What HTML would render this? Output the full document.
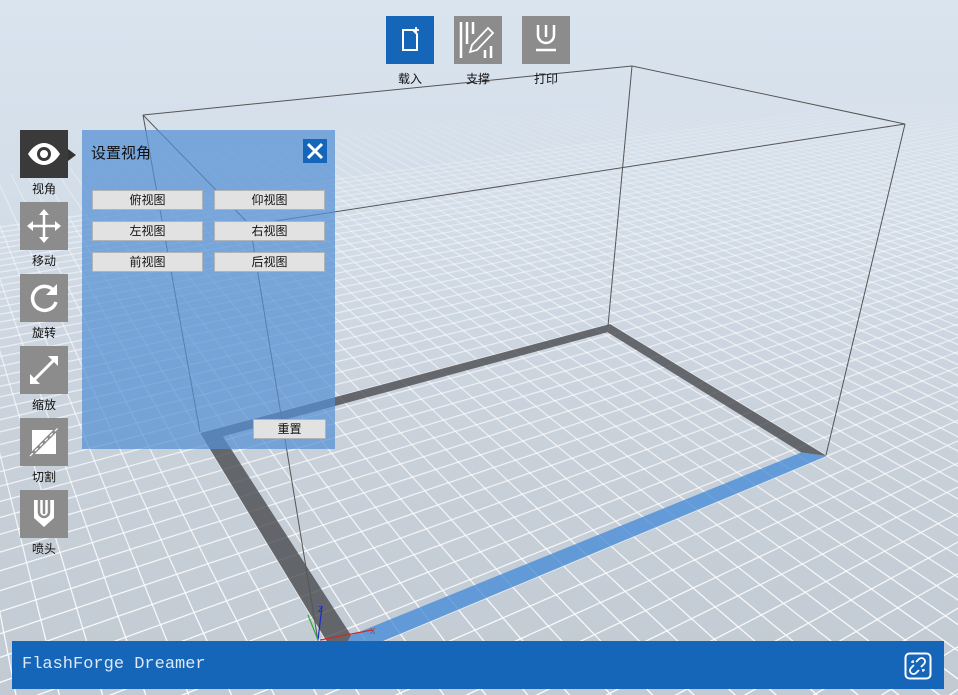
<!DOCTYPE html>
<html><head><meta charset="utf-8"><style>
*{margin:0;padding:0;box-sizing:border-box}
html{width:958px;height:695px;overflow:hidden}
body{width:958px;height:695px;overflow:hidden;position:relative;font-family:"Liberation Sans","Noto Sans CJK SC",sans-serif;background:linear-gradient(#dae4ef 0%,#d3dde8 30%,#c7cfd8 70%,#c2cad3 100%)}
svg#scene{position:absolute;left:0;top:0;overflow:hidden}
.tb{position:absolute;width:48px;height:48px;background:#8c8c8c}
.lbl{position:absolute;width:60px;text-align:center;font-size:12px;color:#111}
.panel{position:absolute;left:82px;top:130px;width:253px;height:319px;background:rgba(84,144,212,0.72)}
.btn{position:absolute;width:111px;height:20px;background:#e2e2e2;border:1px solid #b0b4b8;font-size:12px;text-align:center;line-height:18px;color:#111}
</style></head><body>
<svg id="scene" width="958" height="695">
<defs><linearGradient id="gl" gradientUnits="userSpaceOnUse" x1="0" y1="90" x2="0" y2="695"><stop offset="0" stop-color="#fff" stop-opacity="0"/><stop offset="0.25" stop-color="#fff" stop-opacity="0.45"/><stop offset="1" stop-color="#fff" stop-opacity="0.95"/></linearGradient></defs>
<g id="grid" stroke="url(#gl)" stroke-width="1.3" fill="none"></g>
<g id="frame"></g>
<g stroke="#555" stroke-width="1" fill="none">
<line x1="143" y1="115" x2="632" y2="66"/><line x1="632" y1="66" x2="905" y2="124"/>
<line x1="905" y1="124" x2="250" y2="225"/><line x1="250" y1="225" x2="143" y2="115"/>
<line x1="143" y1="115" x2="200" y2="432"/><line x1="632" y1="66" x2="608" y2="326"/>
<line x1="905" y1="124" x2="826" y2="455"/><line x1="250" y1="225" x2="318" y2="641"/>
</g>
<line x1="318" y1="640" x2="322" y2="606" stroke="#1a2acc" stroke-width="1.2"/>
<text x="318" y="612" font-size="8" fill="#1a2acc" font-family="Liberation Sans">Z</text>
<line x1="308" y1="615" x2="318" y2="640" stroke="#2ab02a" stroke-width="1.2"/>
<line x1="320" y1="640" x2="372" y2="630" stroke="#cc2a2a" stroke-width="1.2"/>
<text x="370" y="634" font-size="8" fill="#cc2a2a" font-family="Liberation Sans">X</text>
</svg>
<script>
(function(){
var P=[[200,433],[610,324],[827,456],[338,660]];
var x0=P[0][0],y0=P[0][1],x1=P[1][0],y1=P[1][1],x2=P[2][0],y2=P[2][1],x3=P[3][0],y3=P[3][1];
var dx1=x1-x2,dx2=x3-x2,dx3=x0-x1+x2-x3,dy1=y1-y2,dy2=y3-y2,dy3=y0-y1+y2-y3;
var den=dx1*dy2-dx2*dy1;var g=(dx3*dy2-dx2*dy3)/den,h=(dx1*dy3-dx3*dy1)/den;
var a=x1-x0+g*x1,b=x3-x0+h*x3,c=x0,d=y1-y0+g*y1,e=y3-y0+h*y3,f=y0;
function T(u,v){var w=g*u+h*v+1;if(w<0.35)return null;return [(a*u+b*v+c)/w,(d*u+e*v+f)/w];}
var N=21,M=14,s='';
function line(fn){var pts=[];for(var t=-3;t<=6;t+=0.02){var p=fn(t);if(p&&p[0]>-300&&p[0]<1260&&p[1]>60&&p[1]<760)pts.push(p[0].toFixed(1)+','+p[1].toFixed(1));}
if(pts.length>1)s+='<polyline points="'+pts.join(' ')+'"/>';}
for(var i=-50;i<=110;i++){(function(i){line(function(t){return T(i/N,t);});})(i);}
for(var j=-30;j<=80;j++){(function(j){line(function(t){return T(t,j/M);});})(j);}
document.getElementById('grid').innerHTML=s;
var k=0.034,kv=0.05;
function q(pts,col){return '<polygon points="'+pts.map(function(p){return p[0].toFixed(1)+','+p[1].toFixed(1)}).join(' ')+'" fill="'+col+'"/>';}
var A=T(0,0),B=T(1,0),C=T(1,1),D=T(0,1),Ai=T(k,kv),Bi=T(1-k,kv),Ci=T(1-k,1-kv),Di=T(k,1-kv);
var fr='';
fr+=q([A,B,Bi,Ai],'rgba(70,72,76,0.78)');
fr+=q([B,C,Ci,Bi],'rgba(70,72,76,0.78)');
fr+=q([A,Ai,Di,D],'rgba(70,72,76,0.78)');
fr+=q([D,Di,Ci,C],'rgba(70,140,215,0.78)');
document.getElementById('frame').innerHTML=fr;
})();
</script>

<div class="tb" style="left:386px;top:16px;background:#1565b8"><svg width="48" height="48"><path d="M17 14h10l4 4v16H17z" fill="none" stroke="#fff" stroke-width="2"/><path d="M30 11v6M27 14h6" stroke="#fff" stroke-width="1.8"/></svg></div>
<div class="tb" style="left:454px;top:16px"><svg width="48" height="48"><path d="M7 6v36M13 6v22M19 6v12" stroke="#fff" stroke-width="2.5"/><path d="M34 12l5 5-16 17-7 2 2-7z" fill="none" stroke="#fff" stroke-width="1.8"/><path d="M31 34v8M37 30v12" stroke="#fff" stroke-width="2.5"/></svg></div>
<div class="tb" style="left:522px;top:16px"><svg width="48" height="48"><path d="M16 9v10a8 8 0 0 0 16 0V9" fill="none" stroke="#fff" stroke-width="2.5"/><path d="M24 9v12" stroke="#fff" stroke-width="2.5"/><path d="M14 34h20" stroke="#fff" stroke-width="2.5"/></svg></div>
<div class="lbl" style="left:380px;top:70px">载入</div>
<div class="lbl" style="left:448px;top:70px">支撑</div>
<div class="lbl" style="left:516px;top:70px">打印</div>

<div class="tb" style="left:20px;top:130px;background:#3a3a3a"><svg width="48" height="48"><path d="M8 24c5-8 11-11 16-11s11 3 16 11c-5 8-11 11-16 11S13 32 8 24z" fill="#fff"/><circle cx="24" cy="24" r="7" fill="#3a3a3a"/><circle cx="24" cy="24" r="4" fill="#fff"/></svg></div>
<svg style="position:absolute;left:68px;top:149px" width="8" height="12"><path d="M0 0l8 6-8 6z" fill="#333"/></svg>
<div class="tb" style="left:20px;top:202px"><svg width="48" height="48"><path d="M24 10v28M10 24h28" stroke="#fff" stroke-width="2.5"/><path d="M24 7l-5 6h10zM24 41l-5-6h10zM7 24l6-5v10zM41 24l-6-5v10z" fill="#fff"/></svg></div>
<div class="tb" style="left:20px;top:274px"><svg width="48" height="48"><path d="M34 17a12 12 0 1 0 2 11" fill="none" stroke="#fff" stroke-width="3.5"/><path d="M37 10v11H26z" fill="#fff"/></svg></div>
<div class="tb" style="left:20px;top:346px"><svg width="48" height="48"><path d="M13 35L35 13" stroke="#fff" stroke-width="3"/><path d="M10 38v-10l10 10zM38 10v10L28 10z" fill="#fff"/></svg></div>
<div class="tb" style="left:20px;top:418px"><svg width="48" height="48"><path d="M12 12h24v24H12z" fill="#fff"/><path d="M10 38L38 10" stroke="#8c8c8c" stroke-width="4"/><path d="M10 38L38 10" stroke="#fff" stroke-width="1.2" stroke-dasharray="4 3"/></svg></div>
<div class="tb" style="left:20px;top:490px"><svg width="48" height="48"><path d="M14 10h20v18l-10 9-10-9z" fill="#fff"/><path d="M19 10v12a5 5 0 0 0 10 0V10" fill="none" stroke="#8c8c8c" stroke-width="2.5"/><path d="M24 10v14" stroke="#8c8c8c" stroke-width="2.5"/></svg></div>
<div class="lbl" style="left:14px;top:180px">视角</div>
<div class="lbl" style="left:14px;top:252px">移动</div>
<div class="lbl" style="left:14px;top:324px">旋转</div>
<div class="lbl" style="left:14px;top:396px">缩放</div>
<div class="lbl" style="left:14px;top:468px">切割</div>
<div class="lbl" style="left:14px;top:540px">喷头</div>

<div class="panel"></div>
<div style="position:absolute;left:91px;top:142px;font-size:15px;color:#111">设置视角</div>
<div style="position:absolute;left:303px;top:139px;width:24px;height:24px;background:#1565b8"><svg width="24" height="24"><path d="M5 5l14 14M19 5L5 19" stroke="#fff" stroke-width="3"/></svg></div>
<div class="btn" style="left:92px;top:190px">俯视图</div>
<div class="btn" style="left:214px;top:190px">仰视图</div>
<div class="btn" style="left:92px;top:221px">左视图</div>
<div class="btn" style="left:214px;top:221px">右视图</div>
<div class="btn" style="left:92px;top:252px">前视图</div>
<div class="btn" style="left:214px;top:252px">后视图</div>
<div class="btn" style="left:253px;top:419px;width:73px">重置</div>

<div style="position:absolute;left:12px;top:641px;width:932px;height:48px;background:#1565b8"></div>
<div style="position:absolute;left:22px;top:655px;font-family:'Liberation Mono',monospace;font-size:17px;color:#dce8f6">FlashForge Dreamer</div>
<svg style="position:absolute;left:904px;top:652px" width="28" height="28"><rect x="1.5" y="1.5" width="25" height="25" rx="4" fill="none" stroke="#fff" stroke-width="2"/><path d="M12 10l3-3a3 3 0 0 1 5 5l-3 3M15 18l-3 3a3 3 0 0 1-5-5l3-3" fill="none" stroke="#fff" stroke-width="1.8"/><path d="M9 8v3M7 10h3M19 20v-3M21 18h-3" stroke="#fff" stroke-width="1.2"/></svg>
</body></html>
